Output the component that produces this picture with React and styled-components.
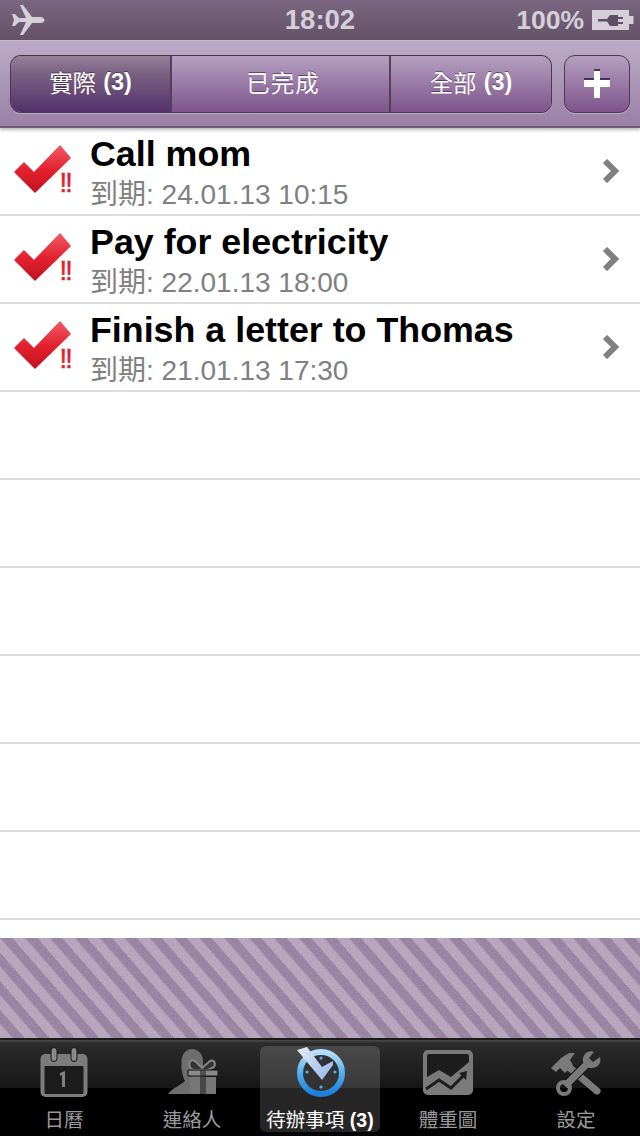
import styled, { createGlobalStyle } from "styled-components";

const SANS = `"Liberation Sans", "Noto Sans CJK TC", sans-serif`;

const GlobalStyle = createGlobalStyle`
  html, body {
    margin: 0;
    padding: 0;
    background: #000;
    font-family: ${SANS};
  }
  * {
    box-sizing: border-box;
  }
`;

const Page = styled.div`
  width: 640px;
  height: 1136px;
  display: flex;
  flex-direction: column;
  overflow: hidden;
`;

const StatusBar = styled.div`
  height: 40px;
  padding: 0 6px;
  display: grid;
  grid-template-columns: 1fr auto 1fr;
  align-items: center;
  background: linear-gradient(#7a6680, #645268);
  color: #d6cfd9;
  font-size: 26.5px;
  font-weight: bold;
`;

const StatusLeft = styled.div`
  display: flex;
  padding-left: 6px;
`;

const Clock = styled.span`
  font-size: 27.5px;
`;

const StatusRight = styled.div`
  display: flex;
  align-items: center;
  justify-content: flex-end;
  gap: 8px;
`;

const Toolbar = styled.div`
  position: relative;
  z-index: 1;
  height: 88px;
  padding: 14px 10px 0;
  display: flex;
  gap: 12px;
  align-items: flex-start;
  background: linear-gradient(#bcabc8, #9a7fa6);
  border-top: 1px solid #c6b8cf;
  border-bottom: 2px solid #6b5a72;
  box-shadow: 0 2px 3px rgba(60, 50, 60, 0.35);
`;

const Segments = styled.div`
  width: 542px;
  height: 58px;
  display: flex;
  border-radius: 11px;
  overflow: hidden;
  border: 1px solid #4c3a55;
  border-top-color: #3f3346;
  box-shadow: 0 1px 0 rgba(225, 215, 232, 0.45);
`;

const Segment = styled.div`
  flex: 0 0 ${(p) => p.$width}px;
  padding-bottom: 4px;
  padding-left: ${(p) => (p.$spaced ? "5px" : "0")};
  display: flex;
  align-items: center;
  justify-content: center;
  gap: 7px;
  font-size: 23.5px;
  color: #fff;
  text-shadow: 0 -1px 0 rgba(50, 30, 60, 0.6);
  background: ${(p) =>
    p.$active
      ? "linear-gradient(#968099, #7a6284 30%, #55306a)"
      : "linear-gradient(#b49fbf, #7e548c)"};
  border-right: ${(p) => (p.$last ? "none" : "2px solid #53405c")};
  letter-spacing: ${(p) => (p.$spaced ? "1px" : "0")};

  b {
    font-size: 23.5px;
    letter-spacing: 0;
  }
`;

const AddButton = styled.div`
  width: 66px;
  height: 58px;
  padding-bottom: 2px;
  display: flex;
  align-items: center;
  justify-content: center;
  border-radius: 11px;
  border: 1px solid #4c3a55;
  background: linear-gradient(#b49fbf, #7e548c);
  box-shadow: 0 1px 0 rgba(225, 215, 232, 0.45);
`;

const List = styled.div`
  height: 810px;
  background: #fff;
  overflow: hidden;
`;

const Row = styled.div`
  height: 88px;
  padding: 0 20px 0 14px;
  display: flex;
  align-items: center;
  border-bottom: 2px solid #dedede;
  background: #fff;
`;

const CheckWrap = styled.div`
  position: relative;
  width: 58px;
  height: 50px;
  margin-top: -2px;
  flex-shrink: 0;
`;

const Priority = styled.span`
  position: absolute;
  right: 1px;
  bottom: -2px;
  font-size: 27px;
  line-height: 27px;
  color: #e2202e;
  letter-spacing: -1.8px;
  -webkit-text-stroke: 0.5px #e2202e;
`;

const RowText = styled.div`
  flex: 1;
  margin-left: 18px;
  margin-top: 4px;
`;

const Title = styled.div`
  font-size: 35.8px;
  line-height: 44px;
  font-weight: bold;
  color: #000;
`;

const Due = styled.div`
  font-size: 28px;
  line-height: 38px;
  color: #808080;
`;

const Pattern = styled.div`
  position: relative;
  height: 100px;
  background: repeating-linear-gradient(
    49deg,
    #b7a2bf 0,
    #b7a2bf 8.4px,
    #a58eae 9.4px,
    #947b9e 10.4px,
    #947b9e 17.8px,
    #a58eae 18.8px
  );
`;

const Grain = styled.svg`
  position: absolute;
  inset: 0;
  width: 100%;
  height: 100%;
  opacity: 0.3;
`;

const TabBar = styled.div`
  height: 98px;
  padding: 6px 0 4px;
  display: flex;
  background: linear-gradient(#4a4a4a 0, #3a3a3a 2px, #2c2c2c 3px, #171717 48px, #000 48px);
  border-top: 2px solid #1b1b1b;
`;

const Tab = styled.div`
  margin: 0 ${(p) => (p.$active ? "4px" : "0")};
  flex: ${(p) => (p.$active ? "0 0 120px" : "0 0 128px")};
  display: flex;
  flex-direction: column;
  align-items: center;
  border-radius: 6px;
  background: ${(p) => (p.$active ? "rgba(255, 255, 255, 0.15)" : "transparent")};
`;

const TabIcon = styled.div`
  height: 54px;
  display: flex;
  align-items: flex-end;
  justify-content: center;
`;

const TabLabel = styled.div`
  margin-top: 11px;
  font-size: 19.5px;
  line-height: 24px;
  white-space: nowrap;
  color: ${(p) => (p.$active ? "#fff" : "#9a9a9a")};

  b {
    font-size: 19.5px;
  }
`;

function Plane() {
  return (
    <svg width="33" height="32" viewBox="0 0 33 32">
      <path
        fill="#d6cfd9"
        d="M0 10 L3 10 L7 14 L14 14 L8 1 L11 1 L20 13 L28 13 C31 13 32.5 15 32.5 16 C32.5 17 31 19 28 19 L20 19 L11 31 L8 31 L14 18 L7 18 L3 22 L0 22 L2 16 Z"
      />
    </svg>
  );
}

function Battery() {
  return (
    <svg width="42" height="20" viewBox="0 0 42 20">
      <path fill="#d6cfd9" d="M0 0 H37 V6 H41.5 V14 H37 V20 H0 Z" />
      <path fill="#5f4e64" d="M6 9 L15 9 L18 5 H26 V7 H31 V9 H26 V12 H31 V14 H26 V16 H18 L15 11.5 L6 11.5 Z" />
    </svg>
  );
}

function Plus() {
  return (
    <svg width="26" height="29" viewBox="0 0 26 29">
      <path fill="#44364e" d="M10 0 H16 V9 H26 V11 H0 V9 H10 Z" />
      <path fill="#fff" d="M10 2 H16 V11 H26 V18 H16 V29 H10 V18 H0 V11 H10 Z" />
    </svg>
  );
}

function Check() {
  return (
    <svg width="58" height="50" viewBox="0 0 58 50">
      <defs>
        <linearGradient id="checkFill" x1="0" y1="0" x2="0" y2="1">
          <stop offset="0" stopColor="#ee5a63" />
          <stop offset="0.5" stopColor="#e42230" />
          <stop offset="1" stopColor="#c4121f" />
        </linearGradient>
      </defs>
      <path
        fill="url(#checkFill)"
        d="M1 27 L10 18 L20 28 L46 1 L56 13 L21 47 Z"
        stroke="url(#checkFill)"
        strokeWidth="1.5"
        strokeLinejoin="round"
      />
    </svg>
  );
}

function Chevron() {
  return (
    <svg width="18" height="24" viewBox="0 0 18 24">
      <path d="M3 2 L13 12 L3 22" fill="none" stroke="#808080" strokeWidth="6" />
    </svg>
  );
}

function CalendarIcon() {
  return (
    <svg width="48" height="50" viewBox="0 0 48 50">
      <rect x="0.5" y="7" width="47" height="43" rx="5" fill="#7c7c7c" />
      <rect x="4.5" y="19" width="39" height="28" rx="1" fill="#1c1c1c" />
      <rect x="11" y="0.5" width="6" height="14" rx="3" fill="#8a8a8a" stroke="#111" strokeWidth="1" />
      <rect x="31" y="0.5" width="6" height="14" rx="3" fill="#8a8a8a" stroke="#111" strokeWidth="1" />
      <path d="M20 26 L25 24 V40 H22 V28 L20 29 Z" fill="#808080" />
    </svg>
  );
}

function ContactsIcon() {
  return (
    <svg width="52" height="48" viewBox="0 0 52 48">
      <path
        fill="#6e6e6e"
        d="M2 45 C6 39 14 37 19 32 C17 28 15 22 15.5 12 C16 4 21 0 26 0 C32 0 37 5 37 12 L37 45 Z"
      />
      <path d="M25 20 C21 13 25 10 29 12 L36 19 L44 12 C48 10 50 14 48 18 L42 21 H28 Z" fill="#333" stroke="#888" strokeWidth="2" />
      <path d="M22 21 H52 V27 H22 Z" fill="#8a8a8a" stroke="#111" strokeWidth="1" />
      <path d="M24 28 H50 V45 H24 Z" fill="#777" />
      <path d="M34 21 H40 V45 H34 Z" fill="#2a2a2a" opacity="0.6" />
    </svg>
  );
}

function ClockIcon() {
  return (
    <svg width="52" height="50" viewBox="0 0 52 50">
      <defs>
        <linearGradient id="ring" x1="0" y1="0" x2="0" y2="1">
          <stop offset="0" stopColor="#b8e0fa" />
          <stop offset="0.5" stopColor="#55b0ef" />
          <stop offset="1" stopColor="#1c7fdc" />
        </linearGradient>
        <linearGradient id="tick" x1="0" y1="0" x2="1" y2="1">
          <stop offset="0" stopColor="#e8eef8" />
          <stop offset="1" stopColor="#8fb4ea" />
        </linearGradient>
      </defs>
      <circle cx="27" cy="26" r="21" fill="#333" stroke="url(#ring)" strokeWidth="6" />
      <circle cx="27" cy="11" r="1.6" fill="#55b0ef" />
      <circle cx="27" cy="40" r="1.6" fill="#55b0ef" />
      <circle cx="13" cy="25" r="1.6" fill="#55b0ef" />
      <circle cx="41" cy="25" r="1.6" fill="#55b0ef" />
      <path d="M3 3 L13 0 L28 20 L39 14 L39 18 L28 33 Z" fill="url(#tick)" />
    </svg>
  );
}

function ChartIcon() {
  return (
    <svg width="50" height="48" viewBox="0 0 50 48">
      <rect x="0" y="1" width="50" height="45" rx="5" fill="#7a7a7a" />
      <rect x="4" y="5" width="42" height="32" rx="2" fill="#1d1d1d" />
      <path d="M4 28 L16 21 L28 28 L46 13 L46 43 L4 43 Z" fill="#7a7a7a" />
      <path d="M3 40 L16 31 L28 39 L41 26" fill="none" stroke="#1d1d1d" strokeWidth="3" />
      <path d="M36 24 L44 22 L43 31 Z" fill="#1d1d1d" />
    </svg>
  );
}

function ToolsIcon() {
  return (
    <svg width="50" height="46" viewBox="0 0 50 46">
      <path d="M13 12 L46 40" stroke="#7a7a7a" strokeWidth="7" strokeLinecap="round" />
      <path d="M0 17 L10 7 L18 2 L24 2 L19 9 L22 14 L14 22 L9 17 L5 21 Z" fill="#7a7a7a" />
      <path d="M14 35 L39 10" stroke="#111" strokeWidth="9" />
      <path d="M14 35 L39 10" stroke="#7a7a7a" strokeWidth="7" />
      <circle cx="13" cy="37" r="6" fill="none" stroke="#7a7a7a" strokeWidth="4" />
      <path d="M35 2 C38 0 41 0 43 1 L38 7 L42 11 L49 6 C50 10 49 14 45 16 C41 18 37 17 34 15 C31 11 31 6 35 2 Z" fill="#7a7a7a" />
    </svg>
  );
}

const TASKS = [
  { title: "Call mom", due: "到期: 24.01.13 10:15" },
  { title: "Pay for electricity", due: "到期: 22.01.13 18:00" },
  { title: "Finish a letter to Thomas", due: "到期: 21.01.13 17:30" },
];

const TABS = [
  { label: "日曆", icon: <CalendarIcon /> },
  { label: "連絡人", icon: <ContactsIcon /> },
  { label: "待辦事項", count: "(3)", icon: <ClockIcon />, active: true },
  { label: "體重圖", icon: <ChartIcon /> },
  { label: "設定", icon: <ToolsIcon /> },
];

export default function App() {
  return (
    <Page>
      <GlobalStyle />
      <StatusBar>
        <StatusLeft>
          <Plane />
        </StatusLeft>
        <Clock>18:02</Clock>
        <StatusRight>
          <span>100%</span>
          <Battery />
        </StatusRight>
      </StatusBar>
      <Toolbar>
        <Segments>
          <Segment $active $width={161}>
            實際 <b>(3)</b>
          </Segment>
          <Segment $width={219} $spaced>
            已完成
          </Segment>
          <Segment $last $width={160}>
            全部 <b>(3)</b>
          </Segment>
        </Segments>
        <AddButton>
          <Plus />
        </AddButton>
      </Toolbar>
      <List>
        {TASKS.map((task) => (
          <Row key={task.title}>
            <CheckWrap>
              <Check />
              <Priority>!!</Priority>
            </CheckWrap>
            <RowText>
              <Title>{task.title}</Title>
              <Due>{task.due}</Due>
            </RowText>
            <Chevron />
          </Row>
        ))}
        {Array.from({ length: 6 }, (_, i) => (
          <Row key={i} />
        ))}
      </List>
      <Pattern>
        <Grain>
          <filter id="grain">
            <feTurbulence type="fractalNoise" baseFrequency="0.7" numOctaves="2" />
            <feColorMatrix type="saturate" values="0" />
          </filter>
          <rect width="100%" height="100%" filter="url(#grain)" />
        </Grain>
      </Pattern>
      <TabBar>
        {TABS.map((tab) => (
          <Tab key={tab.label} $active={tab.active}>
            <TabIcon>{tab.icon}</TabIcon>
            <TabLabel $active={tab.active}>
              {tab.label}
              {tab.count && <b> {tab.count}</b>}
            </TabLabel>
          </Tab>
        ))}
      </TabBar>
    </Page>
  );
}
